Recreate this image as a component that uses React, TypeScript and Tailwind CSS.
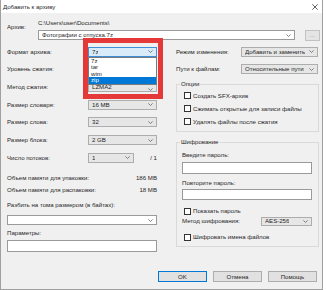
import React from "react";

const Chevron = () => (
  <svg width="5" height="3" viewBox="0 0 5 3" className="shrink-0">
    <path d="M0.4 0.4 L2.5 2.5 L4.6 0.4" fill="none" stroke="#555" strokeWidth="0.7" />
  </svg>
);

function Combo({
  value,
  className = "",
  editable = false,
  focused = false,
}: {
  value: string;
  className?: string;
  editable?: boolean;
  focused?: boolean;
}) {
  const bg = focused
    ? "bg-[#d9ebf9] border-[#3c8fd8]"
    : editable
    ? "bg-white border-[#9a9a9a]"
    : "bg-[#e6e6e6] border-[#adadad]";
  return (
    <div
      className={`flex items-center justify-between border pl-[3px] pr-[3px] leading-[8px] ${bg} ${className}`}
    >
      <span className="whitespace-nowrap overflow-hidden">{value}</span>
      <Chevron />
    </div>
  );
}

const Box = () => <div className="w-[7px] h-[7px] border border-[#333] bg-white shrink-0" />;

function Check({ label, className = "" }: { label: string; className?: string }) {
  return (
    <div className={`flex items-center gap-[2px] ${className}`}>
      <Box />
      <span className="whitespace-nowrap leading-[8px]">{label}</span>
    </div>
  );
}

function LeftRow({ label, children }: { label: string; children: React.ReactNode }) {
  return (
    <div className="grid grid-cols-[81px_69px] items-center h-[17.67px]">
      <span className="whitespace-nowrap leading-[8px]">{label}</span>
      {children}
    </div>
  );
}

export default function App() {
  return (
    <div className="w-[326px] h-[290px] bg-white font-['Liberation_Sans',sans-serif] text-[6.1px] text-[#1f1f1f]">
      <div className="w-[323px] h-[290px] flex flex-col border-l border-r border-b border-[#a0a0a0]">
        {/* Title bar */}
        <div className="h-[13px] bg-white flex items-center justify-between pl-[2px] pr-[4px] shrink-0">
          <span className="leading-[8px]">Добавить к архиву</span>
          <svg width="6" height="6" viewBox="0 0 6 6">
            <path d="M0.3 0.3 L5.7 5.7 M5.7 0.3 L0.3 5.7" stroke="#222" strokeWidth="0.7" />
          </svg>
        </div>

        {/* Body */}
        <div className="relative flex-1 bg-[#f0f0f0] flex flex-col pl-[6px]">
          {/* Archive row */}
          <div className="flex mt-[6px]">
            <span className="w-[31px] pt-[4px] leading-[8px]">Архив:</span>
            <div className="flex flex-col">
              <span className="h-[8px] leading-[8px]">C:\Users\user\Documents\</span>
              <div className="flex items-center mt-[3px] h-[10px]">
                <Combo value="Фотографии с отпуска.7z" editable className="w-[257px] h-[10px]" />
                <div className="ml-[10px] w-[15px] h-[11px] bg-[#e4e4e4] border border-[#c2c2c2] flex items-center justify-center text-[#8a8a8a] leading-[6px]">
                  ...
                </div>
              </div>
            </div>
          </div>

          {/* Columns */}
          <div className="flex mt-[3px]">
            {/* Left column */}
            <div className="w-[150px] flex flex-col">
              <LeftRow label="Формат архива:">
                <div className="relative">
                  <Combo value="7z" focused className="h-[10px]" />
                  <div className="absolute left-0 top-full w-full bg-white border border-[#7a7a7a] z-10 flex flex-col">
                    <div className="h-[6.5px] leading-[6.5px] pl-[2px]">7z</div>
                    <div className="h-[6.5px] leading-[6.5px] pl-[2px]">tar</div>
                    <div className="h-[6.5px] leading-[6.5px] pl-[2px]">wim</div>
                    <div className="h-[6.5px] leading-[6.5px] pl-[2px] bg-[#0078d7] text-white">zip</div>
                  </div>
                </div>
              </LeftRow>
              <LeftRow label="Уровень сжатия:">
                <Combo value="" className="h-[10px]" />
              </LeftRow>
              <LeftRow label="Метод сжатия:">
                <Combo value="LZMA2" className="h-[10px] items-end pb-[0.5px]" />
              </LeftRow>
              <LeftRow label="Размер словаря:">
                <Combo value="16 MB" className="h-[10px]" />
              </LeftRow>
              <LeftRow label="Размер слова:">
                <Combo value="32" className="h-[10px]" />
              </LeftRow>
              <LeftRow label="Размер блока:">
                <Combo value="2 GB" className="h-[10px]" />
              </LeftRow>
              <LeftRow label="Число потоков:">
                <div className="flex items-center justify-between">
                  <Combo value="1" className="h-[10px] w-[46px]" />
                  <span className="leading-[8px]">/ 1</span>
                </div>
              </LeftRow>

              <div className="flex items-center justify-between h-[12px] mt-[5px]">
                <span className="leading-[8px]">Объем памяти для упаковки:</span>
                <span className="leading-[8px]">186 MB</span>
              </div>
              <div className="flex items-center justify-between h-[12px]">
                <span className="leading-[8px]">Объем памяти для распаковки:</span>
                <span className="leading-[8px]">18 MB</span>
              </div>

              <span className="h-[8px] leading-[8px] mt-[5.5px]">Разбить на тома размером (в байтах):</span>
              <Combo value="" editable className="h-[10px] mt-[6px]" />
              <span className="h-[8px] leading-[8px] mt-[4px]">Параметры:</span>
              <div className="h-[12px] mt-[3px] bg-white border border-[#9a9a9a]" />
            </div>

            {/* Right column */}
            <div className="ml-[19px] w-[143px] flex flex-col">
              <div className="grid grid-cols-[65px_77px] items-center h-[17.67px]">
                <span className="leading-[8px] whitespace-nowrap">Режим изменения:</span>
                <Combo value="Добавить и заменить" className="h-[10px]" />
              </div>
              <div className="grid grid-cols-[65px_77px] items-center h-[17.67px]">
                <span className="leading-[8px] whitespace-nowrap">Пути к файлам:</span>
                <Combo value="Относительные пути" className="h-[10px]" />
              </div>

              <fieldset className="mt-[1.7px] border border-[#d9d9d9] pl-[7px] pt-[1px] pb-[3px]">
                <legend className="ml-[-4px] px-[1px] leading-[8px]">Опции</legend>
                <div className="h-[13px] flex items-center">
                  <Check label="Создать SFX-архив" />
                </div>
                <div className="h-[13px] flex items-center">
                  <Check label="Сжимать открытые для записи файлы" />
                </div>
                <div className="h-[13px] flex items-center">
                  <Check label="Удалять файлы после сжатия" />
                </div>
              </fieldset>

              <fieldset className="mt-[6px] border border-[#d9d9d9] pl-[5px] pr-[6px] pb-[5px] flex flex-col">
                <legend className="ml-[-2px] px-[1px] leading-[8px]">Шифрование</legend>
                <span className="h-[8px] leading-[8px] mt-[5px]">Введите пароль:</span>
                <div className="h-[12px] mt-[3px] bg-white border border-[#9a9a9a]" />
                <span className="h-[8px] leading-[8px] mt-[5px]">Повторите пароль:</span>
                <div className="h-[11px] mt-[2px] bg-white border border-[#9a9a9a]" />
                <Check label="Показать пароль" className="h-[8px] mt-[7px] ml-[2px]" />
                <div className="flex items-center justify-between h-[10px] mt-[1px]">
                  <span className="leading-[8px]">Метод шифрования:</span>
                  <Combo value="AES-256" className="h-[9px] w-[51px]" />
                </div>
                <Check label="Шифровать имена файлов" className="h-[8px] mt-[7px] ml-[2px]" />
              </fieldset>
            </div>
          </div>

          {/* Buttons */}
          <div className="mt-auto mb-[7px] flex justify-end gap-[6px] pr-[5px]">
            <div className="w-[49px] h-[11px] bg-[#e1e1e1] border border-[#0078d7] flex items-center justify-center leading-[8px]">
              OK
            </div>
            <div className="w-[49px] h-[11px] bg-[#e1e1e1] border border-[#adadad] flex items-center justify-center leading-[8px]">
              Отмена
            </div>
            <div className="w-[49px] h-[11px] bg-[#e1e1e1] border border-[#adadad] flex items-center justify-center leading-[8px]">
              Помощь
            </div>
          </div>

          {/* Red highlight annotation */}
          <div className="absolute left-[82px] top-[25px] w-[80px] h-[61px] border-[5px] border-[#e53838] z-20 pointer-events-none" />
        </div>
      </div>
    </div>
  );
}
